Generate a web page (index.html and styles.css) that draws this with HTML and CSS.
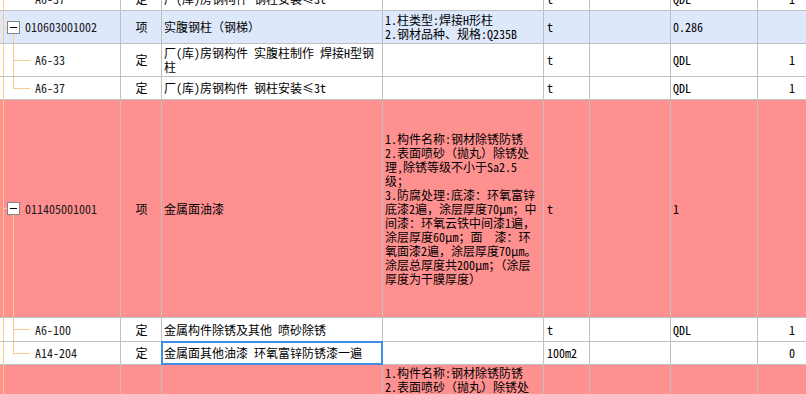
FILE: index.html
```html
<!DOCTYPE html>
<html lang="zh-CN">
<head>
<meta charset="utf-8">
<title>清单</title>
<link rel="stylesheet" href="styles.css">
</head>
<body>
<div class="sheet">
  <div class="row h22">
    <div class="tree child last"><span class="sub">A6-37</span></div>
    <div class="mid">定</div>
    <div>厂(库)房钢构件 钢柱安装≤3t</div>
    <div></div>
    <div class="unit">t</div>
    <div></div>
    <div>QDL</div>
    <div class="num">1</div>
  </div>
  <div class="row h32 blue">
    <div class="tree parent"><span class="box"></span><span class="code">010603001002</span></div>
    <div class="mid">项</div>
    <div>实腹钢柱（钢梯）</div>
    <div><span>1.柱类型:焊接H形柱<br>2.钢材品种、规格:Q235B</span></div>
    <div class="unit">t</div>
    <div></div>
    <div>0.286</div>
    <div class="num"></div>
  </div>
  <div class="row h32">
    <div class="tree child"><span class="sub">A6-33</span></div>
    <div class="mid">定</div>
    <div><span>厂(库)房钢构件 实腹柱制作 焊接H型钢<br>柱</span></div>
    <div></div>
    <div class="unit">t</div>
    <div></div>
    <div>QDL</div>
    <div class="num">1</div>
  </div>
  <div class="row h22">
    <div class="tree child last"><span class="sub">A6-37</span></div>
    <div class="mid">定</div>
    <div>厂(库)房钢构件 钢柱安装≤3t</div>
    <div></div>
    <div class="unit">t</div>
    <div></div>
    <div>QDL</div>
    <div class="num">1</div>
  </div>
  <div class="row h217 pink">
    <div class="tree parent"><span class="box"></span><span class="code">011405001001</span></div>
    <div class="mid">项</div>
    <div>金属面油漆</div>
    <div><span>1.构件名称:钢材除锈防锈<br>2.表面喷砂（抛丸）除锈处<br>理,除锈等级不小于Sa2.5<br>级；<br>3.防腐处理:底漆：环氧富锌<br>底漆2遍，涂层厚度70μm；中<br>间漆：环氧云铁中间漆1遍，<br>涂层厚度60μm；面　漆：环<br>氧面漆2遍，涂层厚度70μm。<br>涂层总厚度共200μm；（涂层<br>厚度为干膜厚度）</span></div>
    <div class="unit">t</div>
    <div></div>
    <div>1</div>
    <div class="num"></div>
  </div>
  <div class="row h23">
    <div class="tree child"><span class="sub">A6-100</span></div>
    <div class="mid">定</div>
    <div>金属构件除锈及其他 喷砂除锈</div>
    <div></div>
    <div class="unit">t</div>
    <div></div>
    <div>QDL</div>
    <div class="num">1</div>
  </div>
  <div class="row h22">
    <div class="tree child last"><span class="sub">A14-204</span></div>
    <div class="mid">定</div>
    <div class="sel">金属面其他油漆 环氧富锌防锈漆一遍</div>
    <div></div>
    <div class="unit">100m2</div>
    <div></div>
    <div></div>
    <div class="num">0</div>
  </div>
  <div class="row pink">
    <div class="tree parent"><span class="box"></span><span class="code">011405001002</span></div>
    <div class="mid">项</div>
    <div>金属面油漆</div>
    <div class="top"><span>1.构件名称:钢材除锈防锈<br>2.表面喷砂（抛丸）除锈处<br>理,除锈等级不小于Sa2.5<br>级；<br>3.防腐处理:底漆：环氧富锌<br>底漆2遍，涂层厚度70μm；中<br>间漆：环氧云铁中间漆1遍，<br>涂层厚度60μm；面　漆：环<br>氧面漆2遍，涂层厚度70μm。<br>涂层总厚度共200μm；（涂层<br>厚度为干膜厚度）</span></div>
    <div class="unit">t</div>
    <div></div>
    <div>1</div>
    <div class="num"></div>
  </div>
</div>
</body>
</html>
```
FILE: styles.css
```css
html, body {
  margin: 0;
  padding: 0;
  overflow: hidden;
}
body {
  width: 806px;
  height: 394px;
  background: #fff;
  color: #000;
  font-family: "Noto Sans Mono CJK SC", "Noto Sans CJK SC", sans-serif;
  font-size: 12px;
  line-height: 14px;
}
.sheet {
  display: flex;
  flex-direction: column;
  gap: 1px;
  width: 806px;
  margin-top: -12px;
  background: #c0c0c0;
}
.row {
  display: grid;
  grid-template-columns: 120px 40px 220px 160px 45px 80px 86px 48px;
  gap: 1px;
  background: #c0c0c0;
}
.row > div {
  display: flex;
  align-items: center;
  padding: 0 2px;
  background-color: #fff;
  white-space: nowrap;
  overflow: hidden;
  min-width: 0;
}
.row.blue > div { background-color: #dde8fb; }
.row.pink > div { background-color: #ff9090; }
.h22 { height: 22px; }
.h23 { height: 23px; }
.h32 { height: 32px; }
.h217 { height: 217px; }

.row > .mid { justify-content: center; padding: 0 0 0 1px; }
.row > .unit { padding-left: 3px; }
.row > .num { justify-content: flex-end; padding-right: 11px; }
.row > .top { align-items: flex-start; padding-top: 1px; padding-bottom: 1px; }

.row > .tree {
  padding: 0;
  background-repeat: no-repeat;
}
.row > .tree.parent {
  background-image:
    linear-gradient(#fcc98c, #fcc98c),
    linear-gradient(#fcc98c, #fcc98c),
    linear-gradient(#fcc98c, #fcc98c);
  background-size: 1px 100%, 4px 1px, 1px calc(50% - 6px);
  background-position: 3px 0, 3px 50%, 13px 100%;
}
.row > .tree.child {
  background-image:
    linear-gradient(#fcc98c, #fcc98c),
    linear-gradient(#fcc98c, #fcc98c),
    linear-gradient(#fcc98c, #fcc98c);
  background-size: 1px 100%, 1px 100%, 17px 1px;
  background-position: 3px 0, 13px 0, 13px 50%;
}
.row > .tree.child.last {
  background-size: 1px 100%, 1px 50%, 17px 1px;
}
.box {
  width: 11px;
  height: 11px;
  margin-left: 7px;
  border: 1px solid #858585;
  background: #fff linear-gradient(#000, #000) center / 7px 1px no-repeat;
  flex: none;
}
.code {
  margin-left: 5px;
  color: #1a1a1a;
}
.sub {
  margin-left: 35px;
  color: #1a1a1a;
}
.row > .sel {
  outline: 2px solid #3d8fe8;
  outline-offset: -1px;
}
```
